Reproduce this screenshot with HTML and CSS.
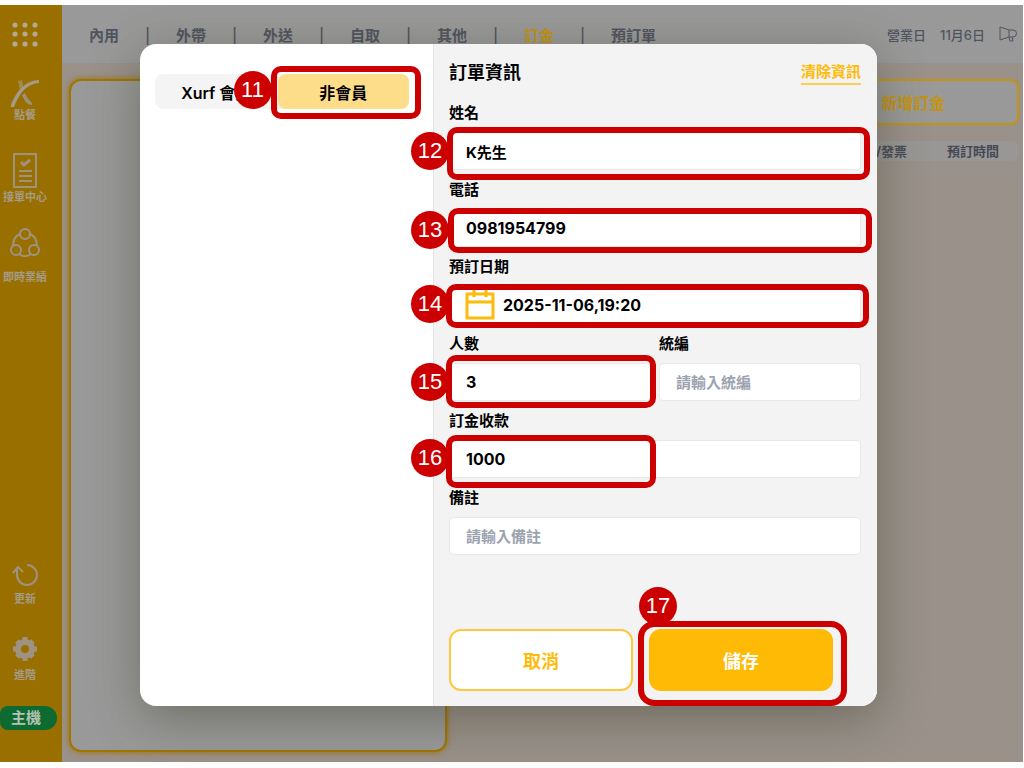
FILE: index.html
```html
<!doctype html>
<html lang="zh-Hant">
<head>
	<meta charset="UTF-8">
	<title>訂金</title>
	<meta name="viewport" content="width=device-width, initial-scale=1.0">
	<link rel="stylesheet" href="styles.css">
</head>
<body>
	<div class="app">
		<nav class="side">
			<a href="#" class="side-menu" aria-label="選單">
				<svg width="26" height="26" viewBox="0 0 26 26" fill="#b3a890">
					<circle cx="3" cy="3" r="2.6"/><circle cx="13" cy="3" r="2.6"/><circle cx="23" cy="3" r="2.6"/>
					<circle cx="3" cy="12" r="2.6"/><circle cx="13" cy="12" r="2.6"/><circle cx="23" cy="12" r="2.6"/>
					<circle cx="3" cy="22" r="2.6"/><circle cx="13" cy="22" r="2.6"/><circle cx="23" cy="22" r="2.6"/>
				</svg>
			</a>
			<a href="#" class="side-item">
				<svg width="30" height="30" viewBox="0 0 30 30">
					<path d="M8 3l4-1c1 4 1 6 2 9l-3 3C9 10 9 7 8 3z" fill="#a08a4c"/>
					<path d="M12 17l3-2c2 5 5 8 7 10v2C17 27 14 22 12 17z" fill="#9c9079"/>
					<path d="M1 27C6 14 14 3 29 2v3C16 6 9 16 4 29H1z" fill="#a59c88"/>
				</svg>
				<span>點餐</span>
			</a>
			<a href="#" class="side-item side-center">
				<svg width="26" height="38" viewBox="0 0 26 38" fill="none" stroke="#9d9380" stroke-width="2">
					<path d="M2 2h22v33H2zM7 19h13M7 24h13M7 29h13"/>
					<path d="M9 10l3 3 6-5" stroke-width="3"/>
				</svg>
				<span>接單中心</span>
			</a>
			<a href="#" class="side-item side-result">
				<svg width="30" height="30" viewBox="0 0 30 30" fill="none" stroke="#9d9380" stroke-width="2">
					<circle cx="15" cy="6" r="5"/><circle cx="6" cy="22" r="5"/><circle cx="24" cy="22" r="5"/>
					<path d="M10 6C5 8 3 12 3 18M20 6c5 2 7 6 7 12M9 26c4 3 8 3 12 0"/>
				</svg>
				<span>即時業績</span>
			</a>
			<a href="#" class="side-item side-update">
				<svg width="26" height="24" viewBox="0 0 26 24" fill="none" stroke="#9d9380" stroke-width="2">
					<path d="M15 2a10 10 0 1 1-10 10V5M1 10l5-6 5 5"/>
				</svg>
				<span>更新</span>
			</a>
			<a href="#" class="side-item side-more">
				<svg width="26" height="26" viewBox="0 0 26 26">
					<circle cx="13" cy="13" r="7" fill="none" stroke="#9d9380" stroke-width="6"/>
					<path d="M13 1v4M13 21v4M1 13h4M21 13h4M5 5l3 3M18 18l3 3M5 21l3-3M18 8l3-3" stroke="#9d9380" stroke-width="5"/>
				</svg>
				<span>進階</span>
			</a>
			<span class="host">主機</span>
		</nav>
		<div class="page">
			<header class="top">
				<ul class="tabs">
					<li><a href="#">內用</a></li>
					<li><a href="#">外帶</a></li>
					<li><a href="#">外送</a></li>
					<li><a href="#">自取</a></li>
					<li><a href="#">其他</a></li>
					<li><a href="#" class="on">訂金</a></li>
					<li><a href="#">預訂單</a></li>
				</ul>
				<div class="day">
					<span>營業日</span>
					<span>11月6日</span>
					<svg width="18" height="18" viewBox="0 0 18 18" fill="none" stroke="#50545f">
						<path d="M1 2l9 3h4a3 3 0 0 1 0 7h-4l-9 3zM10 5v7M10 12l1 4h3l-1-4"/>
					</svg>
				</div>
			</header>
			<main class="content">
				<section class="order"></section>
				<section class="list">
					<button type="button" class="add">新增訂金</button>
					<table class="bookings">
						<tr><th>訂單/發票</th><th>預訂時間</th></tr>
					</table>
				</section>
			</main>
		</div>

		<div class="overlay">
			<form class="dialog" role="dialog" aria-label="訂單資訊">
				<div class="member">
					<div class="switch">
						<button type="button">Xurf 會員</button>
						<div class="mark">
							<button type="button" class="on">非會員</button>
							<i class="frame frame-11"></i><b class="num num-11">11</b>
						</div>
					</div>
				</div>
				<div class="info">
					<div class="info-head">
						<h1>訂單資訊</h1>
						<a href="#">清除資訊</a>
					</div>
					<div class="field">
						<label for="name">姓名</label>
						<div class="mark">
							<input id="name" type="text" value="K先生">
							<i class="frame frame-12"></i><b class="num num-12">12</b>
						</div>
					</div>
					<div class="field">
						<label for="phone">電話</label>
						<div class="mark">
							<input id="phone" class="digits" type="tel" value="0981954799">
							<i class="frame frame-13"></i><b class="num num-13">13</b>
						</div>
					</div>
					<div class="field">
						<label for="date">預訂日期</label>
						<div class="mark">
							<div class="date">
								<svg width="30" height="32" viewBox="0 0 30 32" fill="none" stroke="#ffbb0a" stroke-width="3">
									<path d="M2 5h26v24H2zM1 13h28M9 1v7M21 1v7"/>
								</svg>
								<input id="date" class="digits" type="text" value="2025-11-06,19:20">
							</div>
							<i class="frame frame-14"></i><b class="num num-14">14</b>
						</div>
					</div>
					<div class="pair">
						<div class="field">
							<label for="people">人數</label>
							<div class="mark">
								<input id="people" class="digits" type="text" value="3">
								<i class="frame frame-15"></i><b class="num num-15">15</b>
							</div>
						</div>
						<div class="field">
							<label for="tax">統編</label>
							<input id="tax" type="text" placeholder="請輸入統編">
						</div>
					</div>
					<div class="field">
						<label for="deposit">訂金收款</label>
						<div class="mark">
							<input id="deposit" class="digits" type="text" value="1000">
							<i class="frame frame-16"></i><b class="num num-16">16</b>
						</div>
					</div>
					<div class="field">
						<label for="note">備註</label>
						<input id="note" type="text" placeholder="請輸入備註">
					</div>
					<div class="actions">
						<button type="button" class="cancel">取消</button>
						<div class="mark">
							<button type="submit" class="save">儲存</button>
							<i class="frame frame-17"></i><b class="num num-17">17</b>
						</div>
					</div>
				</div>
			</form>
		</div>
	</div>
</body>
</html>
```

FILE: styles.css
```css
*{
	box-sizing: border-box;
}
body,ul,li,h1{
	margin: 0;
	padding: 0;
	list-style: none;
}
body{
	padding: 5px 1px 6px 0;
	background: #fff;
	font-family: Inter,"Noto Sans CJK TC",sans-serif;
	font-size: 15px;
	font-weight: 700;
}
a{
	color: inherit;
	text-decoration: none;
}
button,input{
	font: inherit;
	color: inherit;
	border: 0;
}
svg{
	display: block;
	flex: none;
}
.app{
	position: relative;
	display: grid;
	grid-template-columns: 62px 1fr;
	min-height: calc(100vh - 11px);
}

/* sidebar */
.side{
	display: flex;
	flex-direction: column;
	padding: 17px 12px 32px 0;
	background: #996f00;
	color: #a59b86;
	font-size: 11px;
	line-height: 14px;
}
.side-menu{
	align-self: center;
	margin-bottom: 30px;
}
.side-item{
	display: flex;
	flex-direction: column;
	align-items: center;
	white-space: nowrap;
}
.side-center{
	margin-top: 30px;
}
.side-result{
	margin-top: 24px;
	gap: 12px;
}
.side-update{
	margin-top: auto;
	gap: 5px;
}
.side-more{
	margin: 30px 0 24px;
	gap: 6px;
}
.host{
	width: 57px;
	padding-left: 11px;
	border-radius: 8px 12px 12px 8px;
	background: #0d6b31;
	color: #b5c2b2;
	font-size: 15px;
	line-height: 24px;
}

/* page behind the dialog */
.page{
	display: flex;
	flex-direction: column;
	background: #99918a;
}
.top{
	display: flex;
	justify-content: space-between;
	align-items: center;
	height: 58px;
	padding: 0 6px 0 27px;
	background: #999;
	color: #50545f;
}
.tabs{
	display: flex;
}
.tabs li + li::before{
	content: "|";
	display: inline-block;
	width: 57px;
	font-weight: 500;
	text-align: center;
}
.tabs .on{
	color: #c39312;
}
.day{
	display: flex;
	align-items: center;
	gap: 14px;
	font-size: 13px;
	font-weight: 500;
}
.content{
	flex: 1;
	display: grid;
	grid-template-columns: 378fr 556fr;
	gap: 16px;
	padding: 16px 4px 10px 7px;
}
.order{
	border: 2px solid #a07400;
	border-radius: 12px;
	background: #999;
	box-shadow: 0 0 6px #a07400;
}
.list{
	display: flex;
	flex-direction: column;
	align-items: flex-end;
	gap: 16px;
}
.add{
	width: 38%;
	height: 46px;
	border: 2px solid #c39312;
	border-radius: 8px;
	background: #999;
	color: #c39312;
	font-size: 16px;
}
.bookings{
	width: 38%;
	border-collapse: collapse;
	border-radius: 8px;
	background: #999795;
	color: #454955;
	font-size: 13px;
	line-height: 20px;
}
.bookings th{
	padding: 0;
	text-align: right;
}
.bookings th:last-child{
	width: 112px;
	padding-right: 20px;
}

/* dialog */
.overlay{
	position: absolute;
	inset: 0;
	display: flex;
	padding: 39px 146px 56px 140px;
}
.dialog{
	flex: 1;
	display: grid;
	grid-template-columns: 293fr 444fr;
	border-radius: 16px;
	background: #fff;
	box-shadow: 0 12px 50px rgba(60,60,40,.45);
}
.member{
	padding: 30px 24px 0 15px;
}
.switch{
	display: grid;
	grid-template-columns: 123fr 132fr;
	border-radius: 8px;
	background: #f4f4f4;
}
.switch button{
	width: 100%;
	height: 35px;
	padding: 0;
	border-radius: 8px;
	background: none;
	font-size: 16px;
	font-weight: 600;
}
.switch .on{
	background: #fedd8a;
	font-weight: 700;
}
.info{
	display: flex;
	flex-direction: column;
	gap: 8px;
	padding: 15px 16px 15px 15px;
	border-left: 1px solid #e6e6e6;
	border-radius: 0 16px 16px 0;
	background: #f3f3f3;
}
.info-head{
	display: flex;
	justify-content: space-between;
	align-items: center;
	margin-bottom: 6px;
}
h1{
	font-size: 18px;
	line-height: 28px;
}
.info-head a{
	border-bottom: 2px solid #ffd050;
	color: #ffbb0a;
	line-height: 22px;
}
.field{
	display: flex;
	flex-direction: column;
	gap: 7px;
}
.field label{
	line-height: 24px;
}
.field input{
	width: 100%;
	height: 38px;
	padding: 0 16px;
	border: 1px solid #e8e8e8;
	border-radius: 4px;
	background: #fff;
}
.field input::placeholder{
	color: #9ca3af;
	opacity: 1;
}
.field .digits{
	font-size: 16px;
}
.date{
	display: flex;
	align-items: center;
	gap: 8px;
	height: 38px;
	padding-left: 15px;
	border: 1px solid #e8e8e8;
	border-radius: 4px;
	background: #fff;
}
.date .digits{
	height: 36px;
	padding: 0;
	border: 0;
}
.pair{
	display: grid;
	grid-template-columns: 1fr 1fr;
	gap: 8px;
}
.actions{
	display: grid;
	grid-template-columns: 1fr 1fr;
	gap: 16px;
	margin-top: auto;
	padding-right: 28px;
}
.actions button{
	width: 100%;
	height: 62px;
	border: 2px solid #ffc83c;
	border-radius: 12px;
	background: #fff;
	color: #ffbb0a;
	font-size: 18px;
}
.actions .save{
	border-color: #ffba05;
	background: #ffba05;
	color: #fff;
}

/* numbered steps */
.mark{
	position: relative;
}
.frame{
	position: absolute;
	border: 6px solid #c00;
	border-radius: 10px;
	pointer-events: none;
}
.num{
	position: absolute;
	left: -38px;
	width: 38px;
	height: 38px;
	border-radius: 50%;
	background: #c00;
	color: #fff;
	font: 22px/38px "Liberation Sans",sans-serif;
	text-align: center;
}
.frame-11{ inset: -8px -12px -10px -7px; }
.num-11{ top: -3px; left: -44px; }
.frame-12{ inset: -5px -9px -10px -2px; }
.num-12{ top: 0; }
.frame-13{ inset: -1px -11px -6px -1px; }
.num-13{ top: 2px; }
.frame-14{ inset: -2px -8px -4px -3px; }
.num-14{ top: -1px; }
.frame-15{ inset: -8px -5px -7px -3px; }
.num-15{ top: 0; }
.frame-16{ inset: -5px calc(50% - 1px) -10px -3px; }
.num-16{ top: -1px; }
.frame-17{ inset: -8px -14px -15px -11px; border-radius: 16px; }
.num-17{ top: -42px; left: -10px; }
```
